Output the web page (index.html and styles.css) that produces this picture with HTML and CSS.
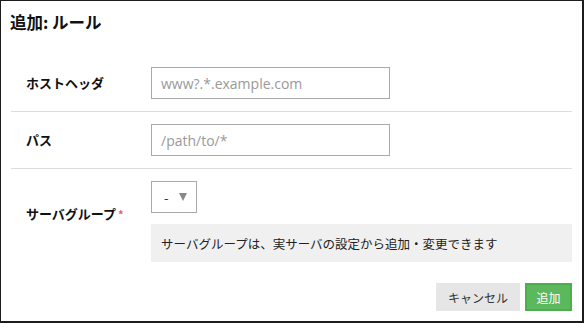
FILE: index.html
```html
<!DOCTYPE html>
<html lang="ja">
<head>
<meta charset="utf-8">
<link rel="stylesheet" href="styles.css">
</head>
<body>
<div class="modal">
  <div class="modal-header">追加: ルール</div>
  <div class="modal-body">
    <div class="row">
      <div class="label">ホストヘッダ</div>
      <div class="field"><div class="input"><span class="ph">www?.*.example.com</span></div></div>
    </div>
    <div class="row">
      <div class="label">パス</div>
      <div class="field"><div class="input"><span class="ph">/path/to/*</span></div></div>
    </div>
    <div class="row row-last">
      <div class="label label-low">サーバグループ<span class="req">*</span></div>
      <div class="field field-col">
        <div class="select"><span class="dash">-</span><span class="caret"></span></div>
        <div class="help">サーバグループは、実サーバの設定から追加・変更できます</div>
      </div>
    </div>
  </div>
  <div class="modal-footer">
    <button class="btn btn-default">キャンセル</button>
    <button class="btn btn-primary">追加</button>
  </div>
</div>
</body>
</html>
```
FILE: styles.css
```css
html, body {
  margin: 0;
  padding: 0;
  background: #1c1c1c;
  width: 584px;
  height: 323px;
  overflow: hidden;
}
body {
  font-family: "Noto Sans CJK JP", "Noto Sans", sans-serif;
  color: #111;
}
.modal {
  background: #fff;
  margin: 1px 2px 2px 1px;
  height: 320px;
  box-sizing: border-box;
  display: flex;
  flex-direction: column;
}
.modal-header {
  font-size: 16.5px;
  font-weight: bold;
  padding: 9px 9px 0;
  height: 45px;
  line-height: 24px;
  box-sizing: border-box;
}
.modal-body {
  padding: 9px 10px 0;
}
.row {
  display: flex;
  align-items: center;
  padding: 12px 0;
  border-bottom: 1px solid #ddd;
}
.row-last {
  border-bottom: none;
  padding-bottom: 0;
}
.label {
  width: 125px;
  padding-left: 15px;
  font-size: 13px;
  font-weight: bold;
  line-height: 20px;
  flex: none;
}
.label-low {
  align-self: flex-start;
  margin-top: 23px;
}
.req {
  color: #e0607a;
  font-size: 11px;
  margin-left: 2px;
}
.field {
  flex: 1;
}
.field-col {
  display: flex;
  flex-direction: column;
  align-items: flex-start;
  gap: 11px;
}
.input {
  width: 239px;
  height: 32px;
  box-sizing: border-box;
  border: 1px solid #aaa;
  padding: 0 9px;
  display: flex;
  align-items: center;
}
.ph {
  color: #999;
  font-size: 14px;
  font-family: "Open Sans", "Noto Sans", sans-serif;
}
.select {
  width: 46px;
  height: 32px;
  box-sizing: border-box;
  border: 1px solid #aaa;
  display: flex;
  align-items: center;
  padding-left: 12px;
}
.dash {
  font-size: 13px;
  color: #333;
  margin-right: 10px;
}
.caret {
  width: 0;
  height: 0;
  border-left: 4px solid transparent;
  border-right: 4px solid transparent;
  border-top: 8px solid #888;
}
.help {
  align-self: stretch;
  background: #f0f0f0;
  height: 38px;
  box-sizing: border-box;
  padding: 0 10px;
  display: flex;
  align-items: center;
  font-size: 12.5px;
  color: #222;
}
.modal-footer {
  display: flex;
  justify-content: flex-end;
  gap: 5px;
  padding: 21px 10px 0;
}
.btn {
  font-family: "Noto Sans CJK JP", "Noto Sans", sans-serif;
  font-size: 12px;
  height: 28px;
  box-sizing: border-box;
  border: 1px solid transparent;
  padding: 0 11px;
  cursor: pointer;
}
.btn-default {
  background: #e6e6e6;
  color: #333;
  width: 84px;
}
.btn-primary {
  background: #5cb85c;
  border: 2px solid #4cae4c;
  color: #fff;
  width: 47px;
  padding: 0;
}
```
